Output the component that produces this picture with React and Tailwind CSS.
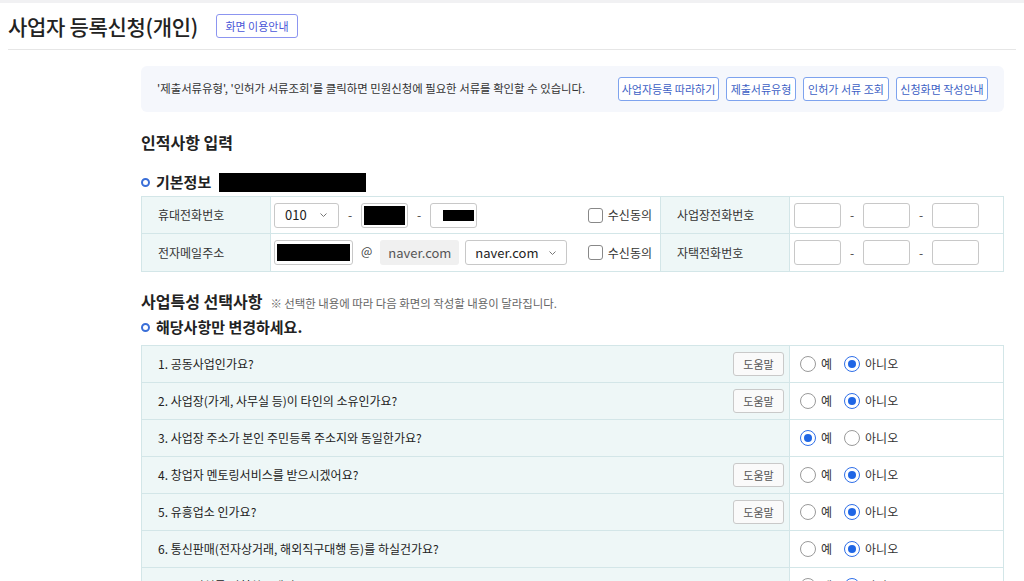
import React from 'react';

const FONT = { fontFamily: '"Noto Sans CJK KR", "Noto Sans", sans-serif' };

const Bullet = () => (
  <span className="inline-block w-[9px] h-[9px] rounded-full border-2 border-[#3a6fd8] mr-[6px]" />
);

const Dash = () => <span className="w-[22px] text-center text-[12px] text-[#444]">-</span>;

const Chevron = () => (
  <svg width="9" height="6" viewBox="0 0 9 6" className="text-[#777]">
    <path d="M1.5 1.5 L4.5 4.5 L7.5 1.5" fill="none" stroke="currentColor" strokeWidth="1" />
  </svg>
);

const Checkbox = ({ label }) => (
  <label className="flex items-center gap-[5px] text-[12px] text-[#333]">
    <span className="w-[15px] h-[15px] rounded-[3px] border border-[#888] bg-white" />
    {label}
  </label>
);

const Radio = ({ checked, label }) => (
  <span className="flex items-center gap-[5px] text-[12px] text-[#333]">
    {checked ? (
      <span className="w-[16px] h-[16px] rounded-full border border-[#2f6fe8] bg-white flex items-center justify-center">
        <span className="w-[8px] h-[8px] rounded-full bg-[#1f66e5]" />
      </span>
    ) : (
      <span className="w-[16px] h-[16px] rounded-full border border-[#9a9a9a] bg-white" />
    )}
    {label}
  </span>
);

const Input = ({ w, redact }) => (
  <span className={`h-[25px] ${w} rounded-[3px] border border-[#c8c8c8] bg-white flex items-center px-[2px]`}>
    {redact}
  </span>
);

const questions = [
  { q: '1. 공동사업인가요?', help: true, yes: false },
  { q: '2. 사업장(가게, 사무실 등)이 타인의 소유인가요?', help: true, yes: false },
  { q: '3. 사업장 주소가 본인 주민등록 주소지와 동일한가요?', help: false, yes: true },
  { q: '4. 창업자 멘토링서비스를 받으시겠어요?', help: true, yes: false },
  { q: '5. 유흥업소 인가요?', help: true, yes: false },
  { q: '6. 통신판매(전자상거래, 해외직구대행 등)를 하실건가요?', help: false, yes: false },
  { q: '7. 주류면허를 신청하시겠어요?', help: false, yes: false },
];

const guideButtons = [
  { t: '사업자등록 따라하기', w: 'w-[101px]' },
  { t: '제출서류유형', w: 'w-[70px]' },
  { t: '인허가 서류 조회', w: 'w-[86px]' },
  { t: '신청화면 작성안내', w: 'w-[92px]' },
];

export default function App() {
  return (
    <div style={FONT} className="bg-white min-h-screen text-[#222]">
      <div className="h-[3px] bg-[#f1f1f3]" />

      {/* page title */}
      <div className="mx-[8px] h-[47px] flex items-center border-b border-[#e6e6e6]">
        <h1 className="text-[21px] font-medium text-[#222] leading-none tracking-[-0.3px]">사업자 등록신청(개인)</h1>
        <button className="ml-[18px] h-[24px] w-[82px] rounded-[3px] border border-[#8c95f0] text-[11px] text-[#4a56d8] bg-white">
          화면 이용안내
        </button>
      </div>

      <div className="ml-[141px] mr-[20px]">
        {/* info box */}
        <div className="mt-[16px] h-[46px] rounded-[6px] bg-[#f5f7fc] flex items-center pl-[16px] pr-[16px]">
          <p className="text-[11.4px] text-[#333]">
            '제출서류유형', '인허가 서류조회'를 클릭하면 민원신청에 필요한 서류를 확인할 수 있습니다.
          </p>
          <div className="ml-auto flex gap-[7px]">
            {guideButtons.map((b) => (
              <button
                key={b.t}
                className={`h-[24px] ${b.w} rounded-[3px] border border-[#7ea3ee] bg-white text-[11px] text-[#3d5fc4] whitespace-nowrap`}
              >
                {b.t}
              </button>
            ))}
          </div>
        </div>

        <h2 className="mt-[18px] text-[16px] font-bold text-[#222] leading-[24px]">인적사항 입력</h2>

        <div className="mt-[17px] flex items-center h-[22px]">
          <Bullet />
          <span className="text-[15px] font-bold text-[#222]">기본정보</span>
          <span className="ml-[8px] w-[147px] h-[19px] bg-black" />
        </div>

        {/* basic info table */}
        <div className="mt-[3px] grid grid-cols-[129px_390px_129px_1fr] border border-[#d3e6e8] text-[12px]">
          <div className="h-[37px] bg-[#eef7f7] border-r border-b border-[#d3e6e8] flex items-center pl-[16px] text-[#333]">휴대전화번호</div>
          <div className="h-[37px] border-r border-b border-[#d3e6e8] flex items-center pl-[3px] pr-[8px]">
            <span className="h-[25px] w-[65px] rounded-[3px] border border-[#c8c8c8] bg-white flex items-center justify-between px-[10px] text-[13px] text-[#222]">
              010 <Chevron />
            </span>
            <Dash />
            <Input w="w-[47px]" redact={<span className="w-[42px] h-[19px] bg-black" />} />
            <Dash />
            <Input w="w-[47px]" redact={<span className="ml-[10px] w-[34px] h-[11px] bg-black" />} />
            <span className="ml-auto"><Checkbox label="수신동의" /></span>
          </div>
          <div className="h-[37px] bg-[#eef7f7] border-r border-b border-[#d3e6e8] flex items-center pl-[16px] text-[#333]">사업장전화번호</div>
          <div className="h-[37px] border-b border-[#d3e6e8] flex items-center pl-[4px]">
            <Input w="w-[47px]" />
            <Dash />
            <Input w="w-[47px]" />
            <Dash />
            <Input w="w-[47px]" />
          </div>

          <div className="h-[37px] bg-[#eef7f7] border-r border-[#d3e6e8] flex items-center pl-[16px] text-[#333]">전자메일주소</div>
          <div className="h-[37px] border-r border-[#d3e6e8] flex items-center pl-[3px] pr-[8px]">
            <Input w="w-[79px]" redact={<span className="w-[74px] h-[17px] bg-black" />} />
            <span className="mx-[8px] text-[12px] text-[#444] -mt-[4px]">@</span>
            <span className="h-[25px] w-[79px] rounded-[3px] bg-[#f0f0f0] flex items-center justify-center text-[13px] text-[#555]">naver.com</span>
            <span className="ml-[6px] h-[25px] w-[102px] rounded-[3px] border border-[#c8c8c8] bg-white flex items-center justify-between px-[9px] text-[13px] text-[#222]">
              naver.com <Chevron />
            </span>
            <span className="ml-auto"><Checkbox label="수신동의" /></span>
          </div>
          <div className="h-[37px] bg-[#eef7f7] border-r border-[#d3e6e8] flex items-center pl-[16px] text-[#333]">자택전화번호</div>
          <div className="h-[37px] flex items-center pl-[4px]">
            <Input w="w-[47px]" />
            <Dash />
            <Input w="w-[47px]" />
            <Dash />
            <Input w="w-[47px]" />
          </div>
        </div>

        <div className="mt-[17px] flex items-baseline gap-[8px]">
          <h2 className="text-[16px] font-bold text-[#222]">사업특성 선택사항</h2>
          <span className="text-[11.4px] text-[#666]">※ 선택한 내용에 따라 다음 화면의 작성할 내용이 달라집니다.</span>
        </div>

        <div className="mt-[3px] flex items-center h-[22px]">
          <Bullet />
          <span className="text-[15px] font-bold text-[#222]">해당사항만 변경하세요.</span>
        </div>

        {/* business characteristics */}
        <div className="mt-[7px] grid grid-cols-[648px_1fr] border-x border-t border-[#d3e6e8]">
          {questions.map((r) => (
            <React.Fragment key={r.q}>
              <div className="h-[37px] bg-[#eef7f7] border-r border-b border-[#d3e6e8] flex items-center pl-[16px] pr-[5px]">
                <span className="text-[12px] text-[#222]">{r.q}</span>
                {r.help && (
                  <button className="ml-auto h-[24px] w-[51px] rounded-[3px] border border-[#c9c9c9] bg-[#fafafa] text-[11px] text-[#555]">
                    도움말
                  </button>
                )}
              </div>
              <div className="h-[37px] border-b border-[#d3e6e8] flex items-center pl-[10px] gap-[12px]">
                <Radio checked={r.yes} label="예" />
                <Radio checked={!r.yes} label="아니오" />
              </div>
            </React.Fragment>
          ))}
        </div>
      </div>
    </div>
  );
}
